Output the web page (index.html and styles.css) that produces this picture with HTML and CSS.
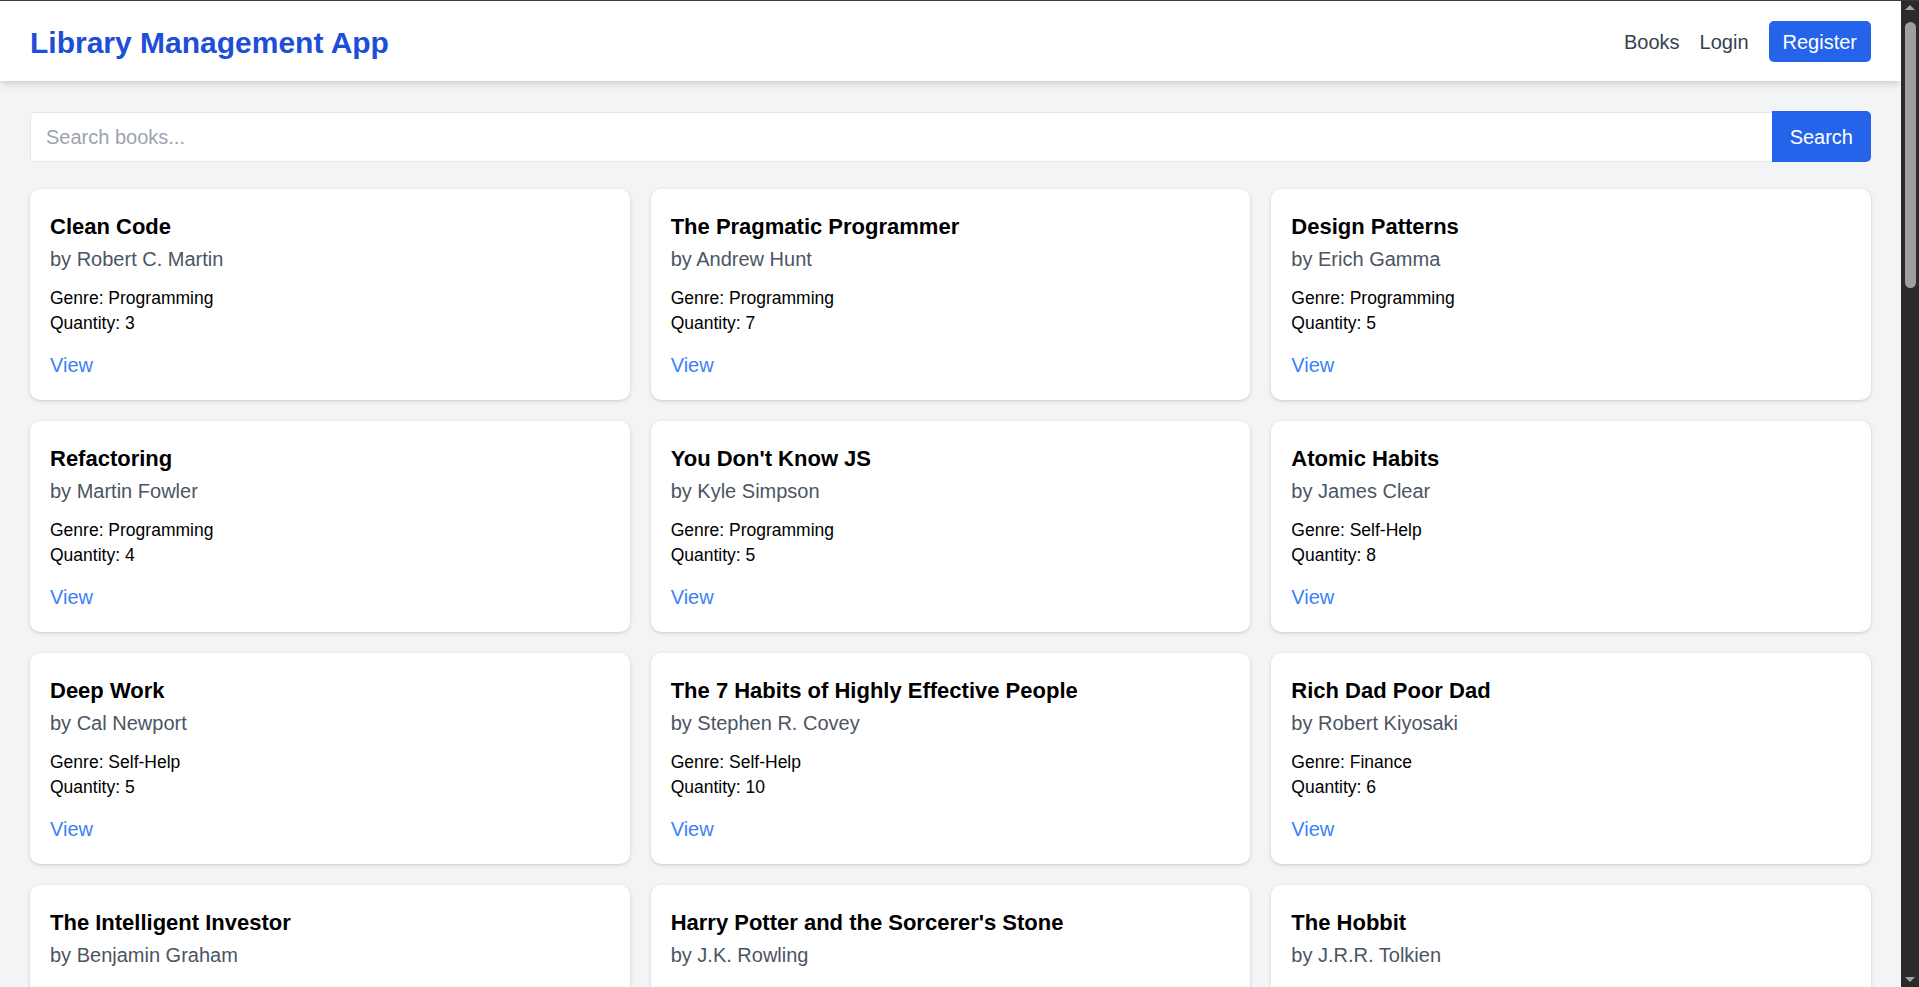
FILE: index.html
```html
<!DOCTYPE html>
<html lang="en">
<head>
<meta charset="utf-8">
<title>Library Management App</title>
<link rel="stylesheet" href="styles.css">
</head>
<body>
<div class="app">
  <header class="topbar">
    <h1 class="brand">Library Management App</h1>
    <nav class="nav">
      <a class="nav-link" href="#">Books</a>
      <a class="nav-link" href="#">Login</a>
      <a class="nav-btn" href="#">Register</a>
    </nav>
  </header>
  <main class="main">
    <form class="search">
      <input class="search-input" type="text" placeholder="Search books...">
      <button class="search-btn" type="button">Search</button>
    </form>
    <section class="grid">
      <article class="card"><h2 class="card-title">Clean Code</h2><p class="author">by Robert C. Martin</p><div class="meta"><p>Genre: Programming</p><p>Quantity: 3</p></div><a class="view" href="#">View</a></article>
      <article class="card"><h2 class="card-title">The Pragmatic Programmer</h2><p class="author">by Andrew Hunt</p><div class="meta"><p>Genre: Programming</p><p>Quantity: 7</p></div><a class="view" href="#">View</a></article>
      <article class="card"><h2 class="card-title">Design Patterns</h2><p class="author">by Erich Gamma</p><div class="meta"><p>Genre: Programming</p><p>Quantity: 5</p></div><a class="view" href="#">View</a></article>
      <article class="card"><h2 class="card-title">Refactoring</h2><p class="author">by Martin Fowler</p><div class="meta"><p>Genre: Programming</p><p>Quantity: 4</p></div><a class="view" href="#">View</a></article>
      <article class="card"><h2 class="card-title">You Don't Know JS</h2><p class="author">by Kyle Simpson</p><div class="meta"><p>Genre: Programming</p><p>Quantity: 5</p></div><a class="view" href="#">View</a></article>
      <article class="card"><h2 class="card-title">Atomic Habits</h2><p class="author">by James Clear</p><div class="meta"><p>Genre: Self-Help</p><p>Quantity: 8</p></div><a class="view" href="#">View</a></article>
      <article class="card"><h2 class="card-title">Deep Work</h2><p class="author">by Cal Newport</p><div class="meta"><p>Genre: Self-Help</p><p>Quantity: 5</p></div><a class="view" href="#">View</a></article>
      <article class="card"><h2 class="card-title">The 7 Habits of Highly Effective People</h2><p class="author">by Stephen R. Covey</p><div class="meta"><p>Genre: Self-Help</p><p>Quantity: 10</p></div><a class="view" href="#">View</a></article>
      <article class="card"><h2 class="card-title">Rich Dad Poor Dad</h2><p class="author">by Robert Kiyosaki</p><div class="meta"><p>Genre: Finance</p><p>Quantity: 6</p></div><a class="view" href="#">View</a></article>
      <article class="card"><h2 class="card-title">The Intelligent Investor</h2><p class="author">by Benjamin Graham</p><div class="meta"><p>Genre: Finance</p><p>Quantity: 4</p></div><a class="view" href="#">View</a></article>
      <article class="card"><h2 class="card-title">Harry Potter and the Sorcerer's Stone</h2><p class="author">by J.K. Rowling</p><div class="meta"><p>Genre: Fantasy</p><p>Quantity: 9</p></div><a class="view" href="#">View</a></article>
      <article class="card"><h2 class="card-title">The Hobbit</h2><p class="author">by J.R.R. Tolkien</p><div class="meta"><p>Genre: Fantasy</p><p>Quantity: 6</p></div><a class="view" href="#">View</a></article>
    </section>
  </main>
</div>
<div class="scrollbar" aria-hidden="true">
  <span class="sb-arrow sb-up"></span>
  <span class="sb-thumb"></span>
  <span class="sb-arrow sb-down"></span>
</div>
</body>
</html>
```

FILE: styles.css
```css
html {
  background: #f3f4f6;
}

body {
  margin: 0;
  height: 100vh;
  box-sizing: border-box;
  overflow: hidden;
  display: flex;
  border-top: 1px solid #3a3a3a;
  background: #f3f4f6;
  font-family: "Liberation Sans", Arial, sans-serif;
  color: #000;
}

.app {
  flex: 1;
  min-width: 0;
  overflow: hidden;
}

/* window scrollbar (dark theme) */
.scrollbar {
  flex: none;
  width: 18px;
  display: flex;
  flex-direction: column;
  align-items: center;
  box-sizing: border-box;
  padding: 4px 0 5px;
  background: #2b2b2b;
}

.sb-arrow {
  width: 0;
  height: 0;
  border-left: 5px solid transparent;
  border-right: 5px solid transparent;
}

.sb-up {
  border-bottom: 5px solid #a3a3a3;
}

.sb-down {
  margin-top: auto;
  border-top: 5px solid #a3a3a3;
}

.sb-thumb {
  width: 11px;
  height: 266px;
  margin-top: 12px;
  border-radius: 6px;
  background: #9f9f9f;
}

.topbar {
  position: relative;
  z-index: 1;
  height: 80px;
  box-sizing: border-box;
  padding: 0 30px;
  display: flex;
  align-items: center;
  justify-content: space-between;
  background: #fff;
  box-shadow: 0 5px 7px -1px rgba(0, 0, 0, 0.1), 0 2px 5px -2px rgba(0, 0, 0, 0.1);
}

.brand {
  margin: 0;
  padding-top: 4px;
  font-size: 30px;
  line-height: 40px;
  font-weight: 700;
  color: #1d4ed8;
}

.nav {
  display: flex;
  align-items: center;
  gap: 20px;
}

.nav-link {
  padding-top: 2px;
  font-size: 20px;
  line-height: 30px;
  color: #374151;
  text-decoration: none;
}

.nav-btn {
  font-size: 20px;
  line-height: 30px;
  padding: 6px 14px 5px;
  border-radius: 5px;
  background: #2563eb;
  color: #fff;
  text-decoration: none;
}

.main {
  padding: 30px;
}

.search {
  display: flex;
  height: 51px;
  margin: 0 0 27px;
}

.search-input {
  flex: 1;
  min-width: 0;
  margin: 1px 0 0;
  box-sizing: border-box;
  height: 50px;
  padding: 0 15px;
  border: 1px solid #e5e7eb;
  border-right: none;
  border-radius: 5px 0 0 5px;
  background: #fff;
  font-family: "Liberation Sans", Arial, sans-serif;
  font-size: 20px;
  color: #111827;
  outline: none;
}

.search-input::placeholder {
  color: #9ca3af;
}

.search-btn {
  box-sizing: border-box;
  height: 51px;
  padding: 2px 18px 0;
  border: none;
  border-radius: 0 5px 5px 0;
  background: #2563eb;
  color: #fff;
  font-family: "Liberation Sans", Arial, sans-serif;
  font-size: 20px;
}

.grid {
  display: grid;
  grid-template-columns: repeat(3, minmax(0, 1fr));
  gap: 21px;
}

.card {
  box-sizing: border-box;
  padding: 20px;
  border-radius: 10px;
  background: #fff;
  box-shadow: 0 1px 4px rgba(0, 0, 0, 0.13), 0 1px 2px rgba(0, 0, 0, 0.06);
}

.card-title {
  margin: 0;
  font-size: 22px;
  line-height: 35px;
  font-weight: 700;
  color: #000;
}

.author {
  margin: 0;
  font-size: 20px;
  line-height: 30px;
  color: #4b5563;
}

.meta {
  margin-top: 12px;
  font-size: 17.5px;
  line-height: 25px;
}

.meta p {
  margin: 0;
}

.view {
  display: inline-block;
  margin-top: 14px;
  font-size: 20px;
  line-height: 30px;
  color: #3b82f6;
  text-decoration: none;
}
```
